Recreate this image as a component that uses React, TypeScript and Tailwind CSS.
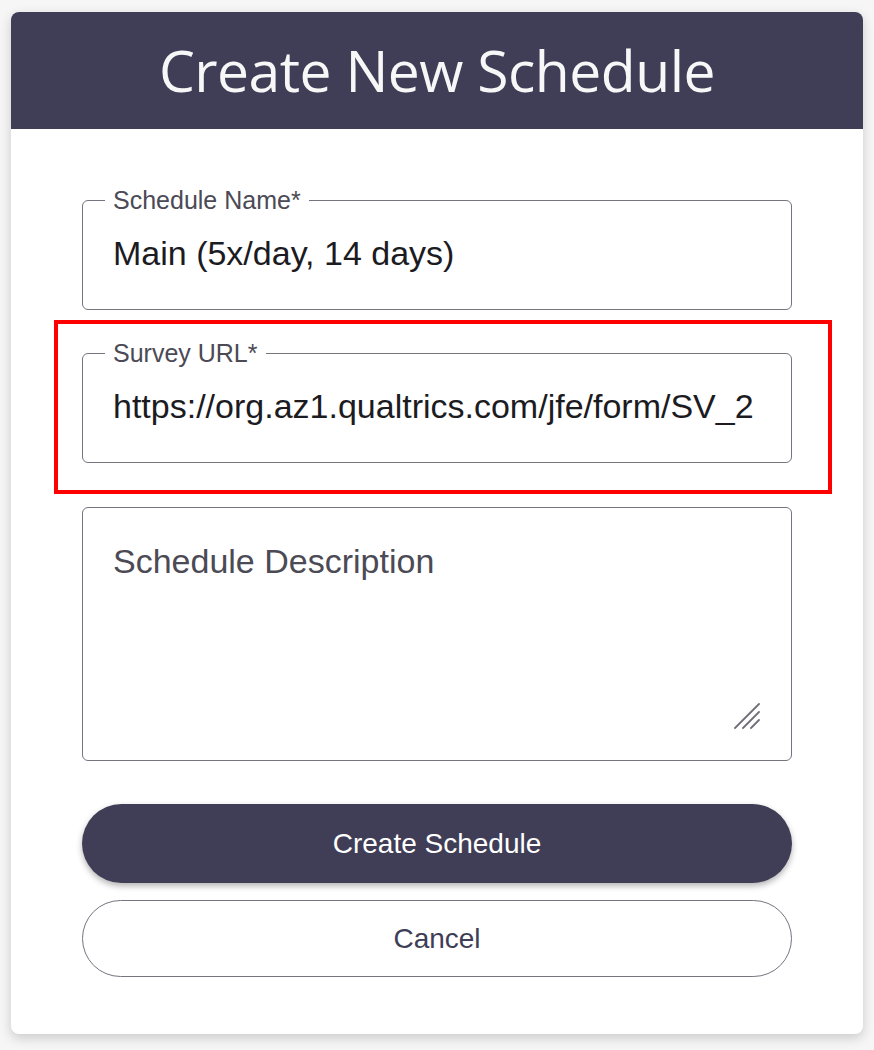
import React from "react";

function Field({ label, value }: { label: string; value: string }) {
  return (
    <fieldset className="min-w-0 rounded-[6px] border-[1.5px] border-[#75747f] px-[20px] pb-[15px]">
      <legend className="ml-[2px] px-[8px] text-[25px] leading-[25px] text-[#4b4a55]">
        {label}
      </legend>
      <div className="flex h-[81px] items-center overflow-hidden whitespace-nowrap pl-[10px] text-[34px] text-[#1c1b1f]">
        {value}
      </div>
    </fieldset>
  );
}

export default function App() {
  return (
    <div
      className="min-h-[1050px] bg-[#f6f6f6] px-[11px] pt-[12px]"
      style={{ fontFamily: '"Liberation Sans", Arial, sans-serif' }}
    >
      <div className="h-[1022px] overflow-hidden rounded-[8px] bg-white shadow-[0_4px_12px_rgba(0,0,0,0.18)]">
        <div className="flex h-[117px] items-center justify-center bg-[#403d56]">
          <h1
            className="text-[57px] font-normal tracking-[-0.5px] text-[#f7f7f7]"
            style={{ fontFamily: '"Open Sans", "Noto Sans", sans-serif' }}
          >
            Create New Schedule
          </h1>
        </div>

        <div className="flex flex-col px-[71px] pt-[59px]">
          <Field label="Schedule Name*" value="Main (5x/day, 14 days)" />

          <div className="mt-[10px] -ml-[28px] -mr-[40px] border-[4px] border-[#ff0000] pl-[24px] pr-[36px] pt-[17px] pb-[27px]">
            <Field label="Survey URL*" value="https://org.az1.qualtrics.com/jfe/form/SV_2" />
          </div>

          <div className="relative mt-[13px] h-[254px] rounded-[6px] border-[1.5px] border-[#75747f]">
            <div className="pl-[30px] pt-[28px] text-[34px] text-[#4b4a55]">
              Schedule Description
            </div>
            <svg
              className="absolute right-[31px] bottom-[31px]"
              width="26"
              height="26"
              viewBox="0 0 26 26"
            >
              <g stroke="#6f6e79" strokeWidth="1.8" strokeLinecap="round">
                <line x1="1" y1="25" x2="25" y2="1" />
                <line x1="9" y1="25" x2="25" y2="9" />
                <line x1="17" y1="25" x2="25" y2="17" />
              </g>
            </svg>
          </div>

          <button className="mt-[43px] h-[79px] rounded-full bg-[#403d56] text-[28px] text-white shadow-[0_3px_6px_rgba(0,0,0,0.3)]">
            Create Schedule
          </button>
          <button className="mt-[17px] h-[77px] rounded-full border-[1.5px] border-[#75747f] bg-white text-[28px] text-[#403d56]">
            Cancel
          </button>
        </div>
      </div>
    </div>
  );
}
